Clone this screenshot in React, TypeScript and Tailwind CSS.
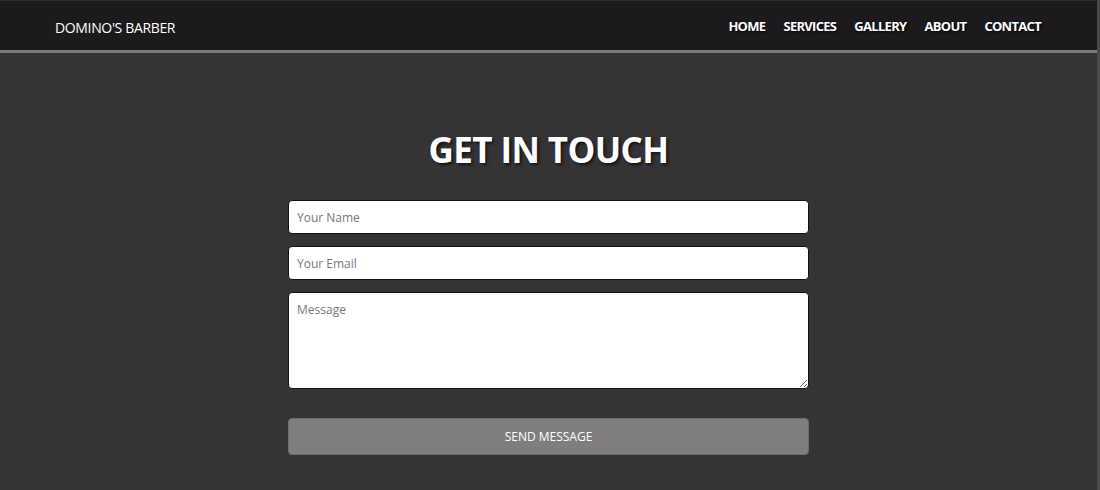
const links = ['HOME', 'SERVICES', 'GALLERY', 'ABOUT', 'CONTACT'];

export default function App() {
  return (
    <div
      className="min-h-[490px] bg-[#353336] border-r-[3px] border-r-[#4a494b] flex flex-col"
      style={{ fontFamily: '"Open Sans", "Noto Sans", sans-serif' }}
    >
      <header className="h-[53px] bg-[#1c1a1d] border-t border-t-[#2c2b2d] border-b-[3px] border-b-[#7b7a7c] flex items-center justify-between pl-[55px] pr-[56px] pt-[3px]">
        <div className="text-white text-[14px] tracking-[-0.35px]">DOMINO'S BARBER</div>
        <nav className="flex gap-[18px]">
          {links.map((l) => (
            <a
              key={l}
              href="#"
              className="text-white text-[13px] font-bold tracking-[-0.7px] [text-shadow:1px_1px_2px_#000]"
            >
              {l}
            </a>
          ))}
        </nav>
      </header>

      <main className="flex flex-col items-center pt-[74px]">
        <h1 className="text-white text-[35px] font-bold leading-[46px] tracking-[-0.6px] [text-shadow:2px_2px_3px_rgba(0,0,0,0.6)]">
          GET IN TOUCH
        </h1>
        <form className="w-[521px] flex flex-col mt-[27px]">
          <input
            type="text"
            placeholder="Your Name"
            className="h-[34px] bg-white rounded-[4px] border border-[#111] px-[8px] text-[12px] placeholder:text-[#777] outline-none"
          />
          <input
            type="email"
            placeholder="Your Email"
            className="h-[34px] mt-[12px] bg-white rounded-[4px] border border-[#111] px-[8px] text-[12px] placeholder:text-[#777] outline-none"
          />
          <textarea
            placeholder="Message"
            className="h-[97px] mt-[12px] bg-white rounded-[4px] border border-[#111] px-[8px] py-[8px] text-[12px] placeholder:text-[#777] outline-none"
          />
          <button
            type="button"
            className="h-[37px] mt-[29px] bg-[#7f7d80] rounded-[4px] text-white text-[12px] border border-[#6e6c6f]"
          >
            SEND MESSAGE
          </button>
        </form>
      </main>
    </div>
  );
}
